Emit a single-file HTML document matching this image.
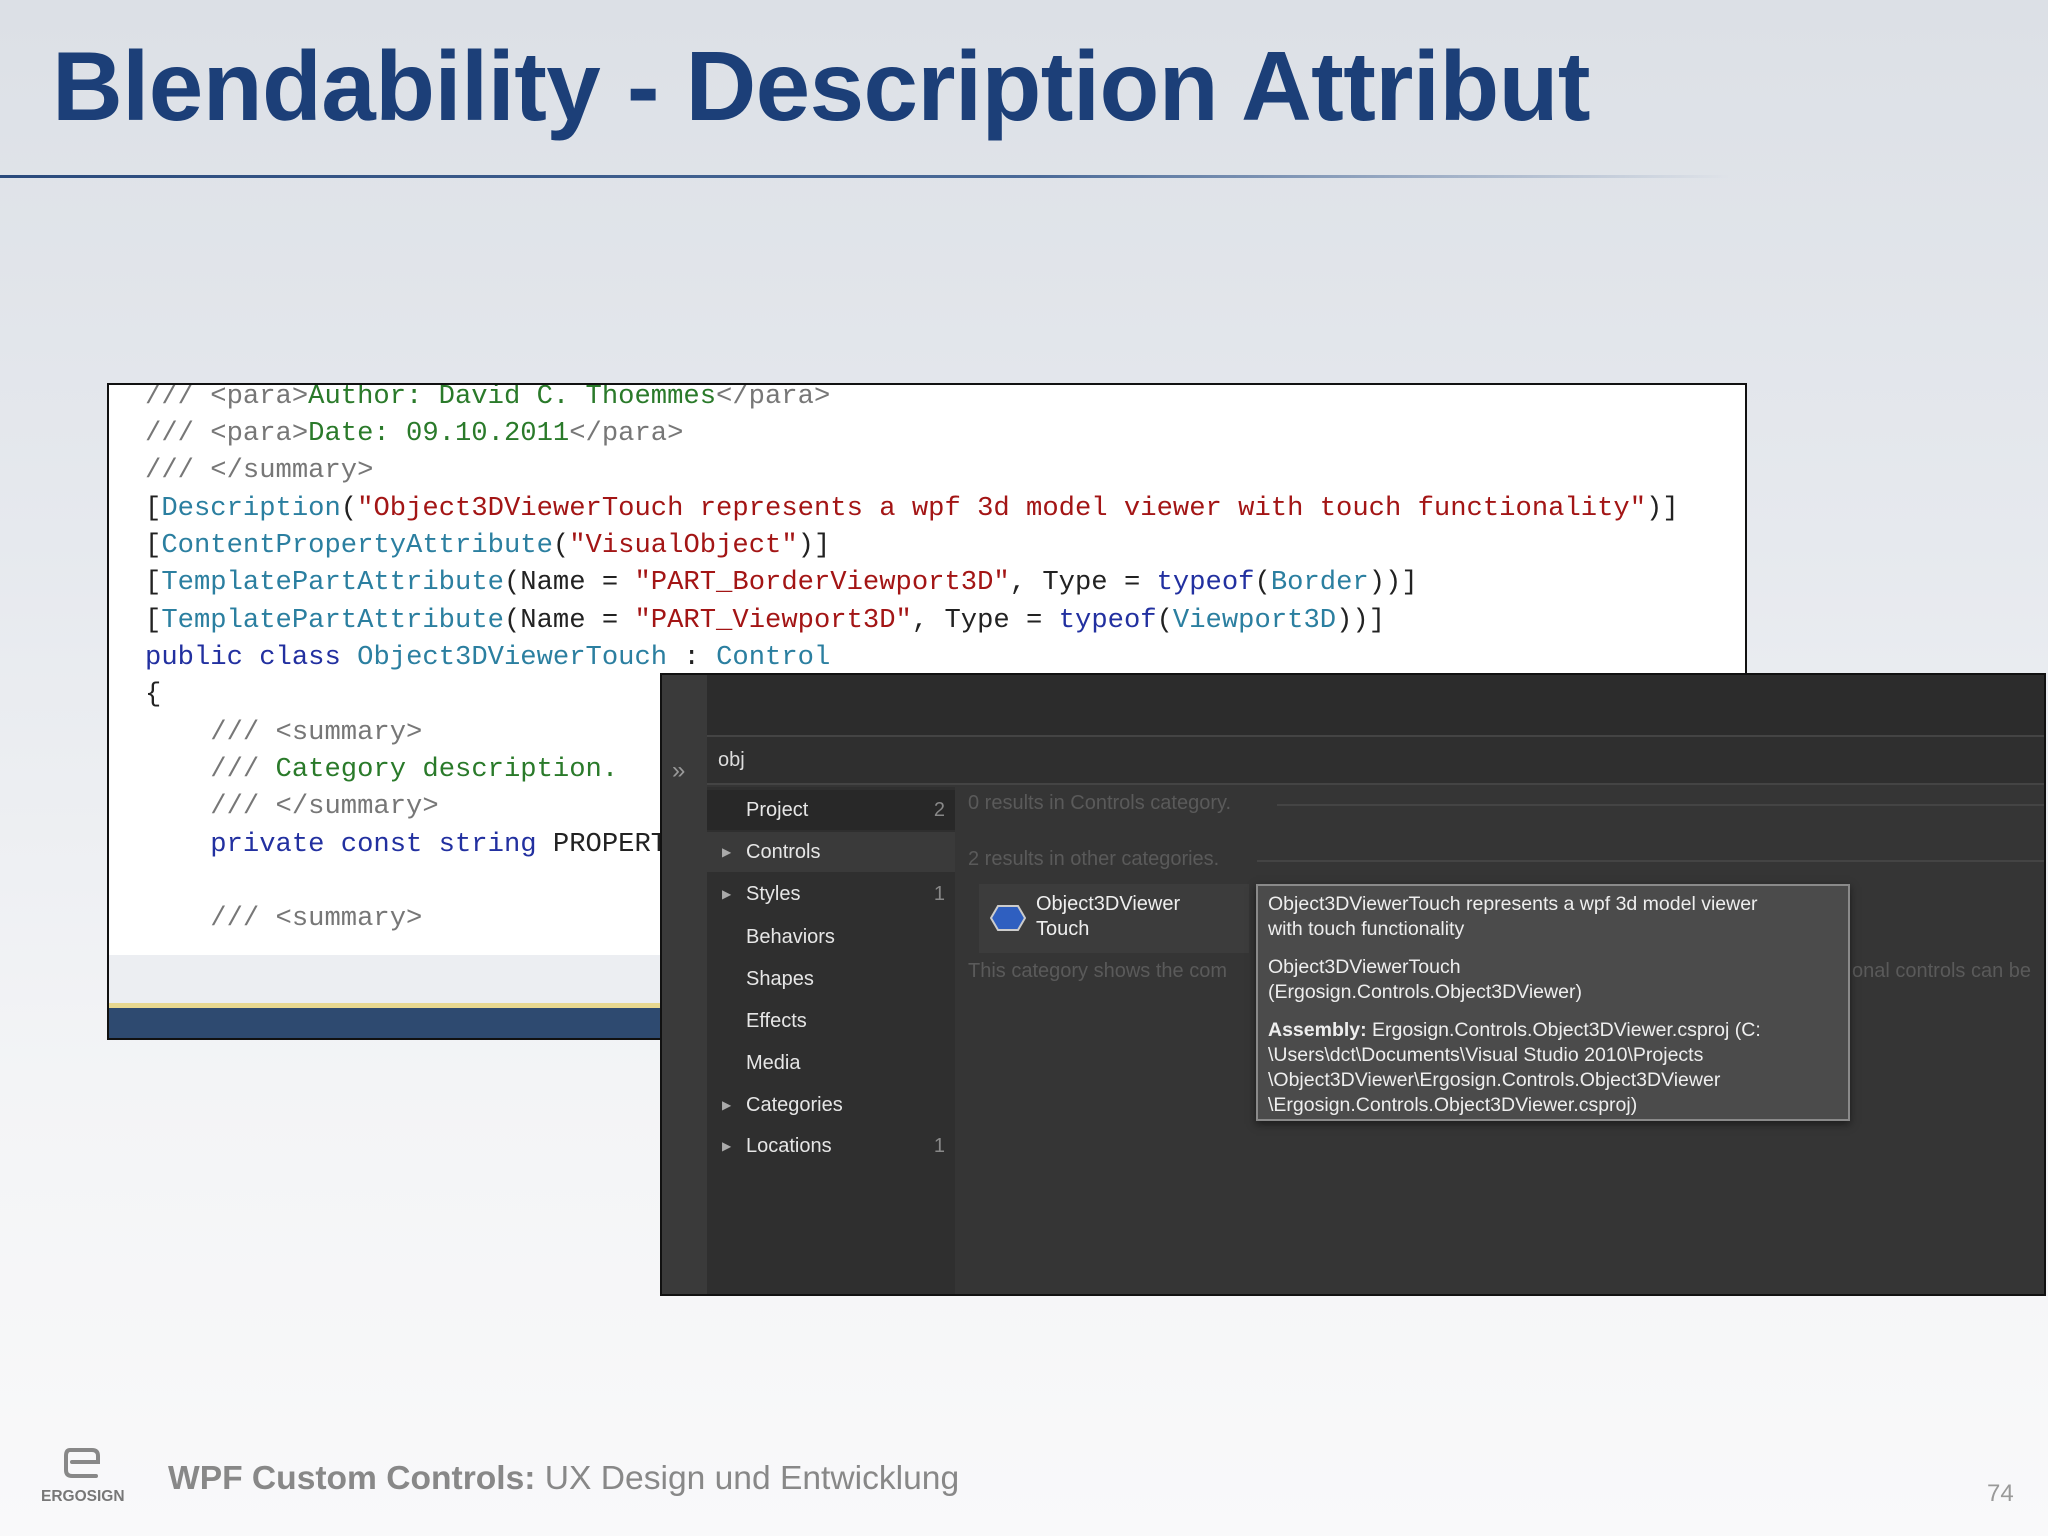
<!DOCTYPE html>
<html><head><meta charset="utf-8"><style>
*{margin:0;padding:0;box-sizing:border-box}
body{width:2048px;height:1536px;overflow:hidden;position:relative;background:linear-gradient(#dce0e6 0%,#e6e9ee 35%,#f3f4f6 70%,#f9f9fa 100%);font-family:"Liberation Sans",sans-serif}
.title{position:absolute;left:52px;top:30px;font-size:98px;font-weight:bold;color:#1c3f78;letter-spacing:-0.6px;white-space:nowrap}
.rule{position:absolute;left:0;top:175px;width:1730px;height:3px;background:linear-gradient(90deg,#2a4a7c 0%,#4a6a98 60%,rgba(120,140,170,0) 100%)}
.code{position:absolute;left:107px;top:383px;width:1640px;height:657px;border:2px solid #111;background:#fff;overflow:hidden;font-family:"Liberation Mono",monospace;font-size:27.2px;color:#222}
.code .ln{position:absolute;left:36px;white-space:pre}
.c{color:#777}.g{color:#2a7a2a}.b{color:#2230a0}.t{color:#2b7fa0}.r{color:#a31515}
.code .bot{position:absolute;left:0;top:570px;width:100%;height:50px;background:#eceef2}
.code .yel{position:absolute;left:0;top:618px;width:100%;height:5px;background:#e8d890}
.code .blu{position:absolute;left:0;top:623px;width:100%;height:40px;background:#2e4a70}
.dark{position:absolute;left:660px;top:673px;width:1386px;height:623px;border:2px solid #111;background:#353535;overflow:hidden;font-family:"Liberation Sans",sans-serif;color:#ddd}
.topbar{position:absolute;left:0;top:0;width:100%;height:60px;background:#2c2c2c}
.lcol{position:absolute;left:0;top:0;width:45px;height:100%;background:#3a3a3a}
.search{position:absolute;left:45px;top:60px;right:0;height:50px;background:#2f2f2f;border-top:2px solid #444;border-bottom:2px solid #444}
.nav{position:absolute;left:45px;top:112px;width:248px;bottom:0;background:#2f2f2f}
.nav div{position:absolute;left:0;width:248px;height:40px;font-size:20px;padding-left:39px;line-height:40px;color:#e6e6e6}
.nav .n{position:absolute;right:10px;left:auto;width:auto;padding:0;color:#888}
.nav .ar{position:absolute;left:15px;font-size:12px;color:#aaa}
.muted{position:absolute;color:#5a5a5a;font-size:20px;white-space:nowrap}
.card{position:absolute;left:317px;top:209px;width:270px;height:69px;background:#3c3c3c}
.tip{position:absolute;left:594px;top:209px;width:594px;height:237px;background:#4b4b4b;border:2px solid #8a8a8a;box-shadow:0 3px 8px rgba(0,0,0,.5);padding:6px 10px;font-size:19.5px;line-height:25px;color:#eee}
.foot{position:absolute;left:168px;top:1460px;font-size:33.6px;color:#888;white-space:nowrap}
</style></head><body>
<div class="title">Blendability - Description Attribut</div>
<div class="rule"></div>

<div class="code">
<div class="ln" style="top:-4px"><span class="c">/// &lt;para&gt;</span><span class="g">Author: David C. Thoemmes</span><span class="c">&lt;/para&gt;</span></div>
<div class="ln" style="top:33px"><span class="c">/// &lt;para&gt;</span><span class="g">Date: 09.10.2011</span><span class="c">&lt;/para&gt;</span></div>
<div class="ln" style="top:70px"><span class="c">/// &lt;/summary&gt;</span></div>
<div class="ln" style="top:108px">[<span class="t">Description</span>(<span class="r">"Object3DViewerTouch represents a wpf 3d model viewer with touch functionality"</span>)]</div>
<div class="ln" style="top:145px">[<span class="t">ContentPropertyAttribute</span>(<span class="r">"VisualObject"</span>)]</div>
<div class="ln" style="top:182px">[<span class="t">TemplatePartAttribute</span>(Name = <span class="r">"PART_BorderViewport3D"</span>, Type = <span class="b">typeof</span>(<span class="t">Border</span>))]</div>
<div class="ln" style="top:220px">[<span class="t">TemplatePartAttribute</span>(Name = <span class="r">"PART_Viewport3D"</span>, Type = <span class="b">typeof</span>(<span class="t">Viewport3D</span>))]</div>
<div class="ln" style="top:257px"><span class="b">public class</span> <span class="t">Object3DViewerTouch</span> : <span class="t">Control</span></div>
<div class="ln" style="top:294px">{</div>
<div class="ln" style="top:332px">    <span class="c">/// &lt;summary&gt;</span></div>
<div class="ln" style="top:369px">    <span class="c">///</span> <span class="g">Category description.</span></div>
<div class="ln" style="top:406px">    <span class="c">/// &lt;/summary&gt;</span></div>
<div class="ln" style="top:444px">    <span class="b">private const string</span> PROPERTY</div>
<div class="ln" style="top:518px">    <span class="c">/// &lt;summary&gt;</span></div>
<div class="bot"></div><div class="yel"></div><div class="blu"></div>
</div>

<div class="dark">
<div class="topbar"></div>
<div class="lcol"></div>
<div style="position:absolute;left:10px;top:82px;color:#999;font-size:24px">»</div>
<div class="search"><span style="position:absolute;left:11px;top:12px;font-size:20px;color:#ddd">obj</span></div>
<div class="nav">
<div style="top:3px;background:#282828">Project<span class="n">2</span></div>
<div style="top:45px;background:#3a3a3a"><span class="ar">▶</span>Controls</div>
<div style="top:87px"><span class="ar">▶</span>Styles<span class="n">1</span></div>
<div style="top:130px">Behaviors</div>
<div style="top:172px">Shapes</div>
<div style="top:214px">Effects</div>
<div style="top:256px">Media</div>
<div style="top:298px"><span class="ar">▶</span>Categories</div>
<div style="top:339px"><span class="ar">▶</span>Locations<span class="n">1</span></div>
</div>
<div class="muted" style="left:306px;top:117px">0 results in Controls category.</div>
<div style="position:absolute;left:615px;top:129px;right:0;height:2px;background:#444"></div>
<div class="muted" style="left:306px;top:173px">2 results in other categories.</div>
<div style="position:absolute;left:595px;top:185px;right:0;height:2px;background:#444"></div>
<div class="card">
<svg style="position:absolute;left:11px;top:20px" width="36" height="28"><polygon points="8,2 28,2 35,14 28,26 8,26 1,14" fill="#2f5fc0" stroke="#ccc" stroke-width="2"/></svg>
<div style="position:absolute;left:57px;top:8px;font-size:20px;line-height:25px;color:#eee">Object3DViewer<br>Touch</div>
</div>
<div class="muted" style="left:306px;top:285px">This category shows the com</div>
<div class="muted" style="left:1190px;top:285px">onal controls can be</div>
<div class="tip">
Object3DViewerTouch represents a wpf 3d model viewer<br>with touch functionality
<div style="margin-top:13px">Object3DViewerTouch<br>(Ergosign.Controls.Object3DViewer)</div>
<div style="margin-top:13px"><b>Assembly:</b> Ergosign.Controls.Object3DViewer.csproj (C:<br>\Users\dct\Documents\Visual Studio 2010\Projects<br>\Object3DViewer\Ergosign.Controls.Object3DViewer<br>\Ergosign.Controls.Object3DViewer.csproj)</div>
</div>
</div>

<svg style="position:absolute;left:62px;top:1446px" width="42" height="36"><path d="M8 4 H30 Q36 4 36 10 V16 H10 M8 4 Q4 4 4 10 V24 Q4 30 10 30 H34" fill="none" stroke="#888" stroke-width="4" stroke-linecap="round"/></svg>
<div style="position:absolute;left:41px;top:1488px;font-size:15.5px;font-weight:bold;color:#777">ERGOSIGN</div>
<div class="foot"><span style="font-weight:bold">WPF Custom Controls:</span> UX Design und Entwicklung</div>
<div style="position:absolute;left:1987px;top:1480px;font-size:24px;color:#999">74</div>
</body></html>
